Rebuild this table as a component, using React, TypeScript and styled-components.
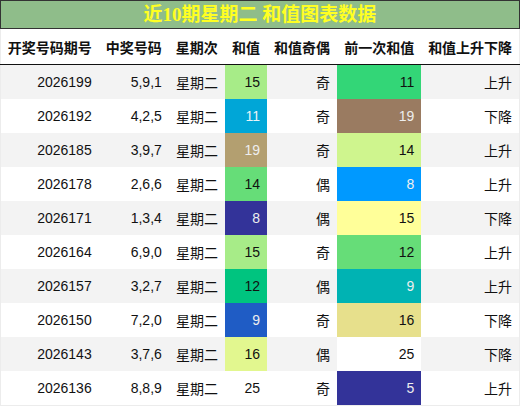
import { createGlobalStyle } from "styled-components";
import styled from "styled-components";

type row = {
  issue: string;
  nums: string;
  week: string;
  sum: number;
  sumBg: string;
  sumFg: string;
  parity: string;
  prev: number;
  prevBg: string;
  prevFg: string;
  trend: string;
};

const rows: row[] = [
  { issue: "2026199", nums: "5,9,1", week: "星期二", sum: 15, sumBg: "#a7ec88", sumFg: "#111", parity: "奇", prev: 11, prevBg: "#33d677", prevFg: "#111", trend: "上升" },
  { issue: "2026192", nums: "4,2,5", week: "星期二", sum: 11, sumBg: "#00a6d7", sumFg: "#e8f4f8", parity: "奇", prev: 19, prevBg: "#9a7b61", prevFg: "#eee", trend: "下降" },
  { issue: "2026185", nums: "3,9,7", week: "星期二", sum: 19, sumBg: "#b39f70", sumFg: "#eee", parity: "奇", prev: 14, prevBg: "#cff58e", prevFg: "#111", trend: "上升" },
  { issue: "2026178", nums: "2,6,6", week: "星期二", sum: 14, sumBg: "#66dd78", sumFg: "#111", parity: "偶", prev: 8, prevBg: "#0099ff", prevFg: "#f0f0f0", trend: "上升" },
  { issue: "2026171", nums: "1,3,4", week: "星期二", sum: 8, sumBg: "#333399", sumFg: "#eee", parity: "偶", prev: 15, prevBg: "#ffff99", prevFg: "#111", trend: "下降" },
  { issue: "2026164", nums: "6,9,0", week: "星期二", sum: 15, sumBg: "#a7ec88", sumFg: "#111", parity: "奇", prev: 12, prevBg: "#66dd78", prevFg: "#111", trend: "上升" },
  { issue: "2026157", nums: "3,2,7", week: "星期二", sum: 12, sumBg: "#00c47f", sumFg: "#111", parity: "偶", prev: 9, prevBg: "#00b3b3", prevFg: "#eee", trend: "上升" },
  { issue: "2026150", nums: "7,2,0", week: "星期二", sum: 9, sumBg: "#1f5cc5", sumFg: "#eee", parity: "奇", prev: 16, prevBg: "#e7e08c", prevFg: "#111", trend: "下降" },
  { issue: "2026143", nums: "3,7,6", week: "星期二", sum: 16, sumBg: "#e2f78f", sumFg: "#111", parity: "偶", prev: 25, prevBg: "#ffffff", prevFg: "#111", trend: "下降" },
  { issue: "2026136", nums: "8,8,9", week: "星期二", sum: 25, sumBg: "transparent", sumFg: "#111", parity: "奇", prev: 5, prevBg: "#333399", prevFg: "#eee", trend: "上升" },
];

const heads = ["开奖号码期号", "中奖号码", "星期次", "和值", "和值奇偶", "前一次和值", "和值上升下降"];
const widths = [98, 70, 56, 42, 70, 84, 98];

const App = () => {
  return (
    <Page>
      <GlobalStyle />
      <Title>近10期星期二 和值图表数据</Title>
      <Table>
        <colgroup>
          {widths.map((w, i) => (
            <col key={i} style={{ width: w }} />
          ))}
        </colgroup>
        <thead>
          <tr>
            {heads.map((h) => (
              <HeadCell key={h}>{h}</HeadCell>
            ))}
          </tr>
        </thead>
        <tbody>
          {rows.map((r, i) => (
            <Row key={r.issue} $odd={i % 2 === 0}>
              <Cell>{r.issue}</Cell>
              <Cell>{r.nums}</Cell>
              <Cell>{r.week}</Cell>
              <Cell $bg={r.sumBg} $fg={r.sumFg}>{r.sum}</Cell>
              <Cell>{r.parity}</Cell>
              <Cell $bg={r.prevBg} $fg={r.prevFg}>{r.prev}</Cell>
              <Cell>{r.trend}</Cell>
            </Row>
          ))}
        </tbody>
      </Table>
    </Page>
  );
};

export default App;

const GlobalStyle = createGlobalStyle`
  body {
    margin: 0;
    background: #fff;
    font-family: "Liberation Sans", "Noto Sans CJK SC", sans-serif;
  }
`;

const Page = styled.div`
  width: 520px;
`;

const Title = styled.div`
  height: 27px;
  border: 1px solid #333;
  background: #8fbd8a;
  color: #ffff22;
  font-family: "Liberation Serif", "Noto Sans CJK SC", serif;
  font-weight: bold;
  font-size: 19px;
  line-height: 27px;
  text-align: center;
`;

const Table = styled.table`
  width: 520px;
  table-layout: fixed;
  border-collapse: collapse;
  border: 1px solid #ececec;
  border-top: none;
  font-size: 14px;
  color: #111;
`;

const HeadCell = styled.th`
  height: 35px;
  padding: 0;
  text-align: center;
  font-family: "Noto Sans CJK SC", sans-serif;
  font-weight: bold;
  font-size: 14px;
  color: #111;
  background: #fff;
  border-bottom: 1px solid #111;
  white-space: nowrap;
`;

const Row = styled.tr<{ $odd: boolean }>`
  background: ${(p) => (p.$odd ? "#f3f3f3" : "#fff")};
`;

const Cell = styled.td<{ $bg?: string; $fg?: string }>`
  height: 34px;
  padding: 0 7px;
  text-align: right;
  white-space: nowrap;
  background: ${(p) => p.$bg || "transparent"};
  color: ${(p) => p.$fg || "#111"};
`;
